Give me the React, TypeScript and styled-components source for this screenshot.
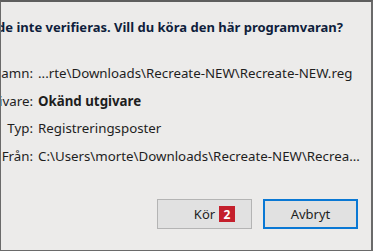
import styled, { createGlobalStyle } from 'styled-components'

const GlobalStyle = createGlobalStyle`
  html, body {
    margin: 0;
    padding: 0;
    background: #ecebea;
  }
  body {
    font-family: 'Noto Sans', 'Open Sans', sans-serif;
  }
`

const rows = [
  { label: 'Namn:', value: '...rte\\Downloads\\Recreate-NEW\\Recreate-NEW.reg' },
  { label: 'Utgivare:', value: 'Okänd utgivare', strong: true },
  { label: 'Typ:', value: 'Registreringsposter' },
  { label: 'Från:', value: 'C:\\Users\\morte\\Downloads\\Recreate-NEW\\Recrea...' }
]

export default function App() {
  return (
    <>
      <GlobalStyle />
      <Frame>
        <Heading>
          <span>Utgivaren kunde inte verifieras. Vill du köra den här programvaran?</span>
        </Heading>
        <Details>
          {rows.map((r) => (
            <Row key={r.label}>
              <Label>
                <span>{r.label}</span>
              </Label>
              <Value $strong={r.strong}>{r.value}</Value>
            </Row>
          ))}
        </Details>
        <Buttons>
          <Button>
            Kör
            <Badge>2</Badge>
          </Button>
          <Button $primary>Avbryt</Button>
        </Buttons>
      </Frame>
    </>
  )
}

const Frame = styled.div`
  box-sizing: border-box;
  width: 373px;
  height: 251px;
  background: #ecebea;
  border-top: 2px solid #5e5e5e;
  border-left: 1px solid #6a6a6a;
  border-right: 2px solid #6a6a6a;
  border-bottom: 1px solid #6a6a6a;
  overflow: hidden;
  display: flex;
  flex-direction: column;
`

const Heading = styled.div`
  display: flex;
  justify-content: flex-end;
  white-space: nowrap;
  padding: 16px 28px 0 0;
  height: 22px;
  font-size: 13px;
  font-weight: 700;
  color: #0f1e3c;
`

const Details = styled.div`
  display: flex;
  flex-direction: column;
  gap: 9.6px;
  margin-top: 24px;
`

const Row = styled.div`
  display: flex;
  align-items: center;
  height: 18px;
  font-size: 13.3px;
  color: #1e1e1e;
  white-space: nowrap;
`

const Label = styled.div`
  width: 32px;
  flex: none;
  display: flex;
  justify-content: flex-end;
`

const Value = styled.div<{ $strong?: boolean }>`
  margin-left: 5px;
  font-weight: ${(p) => (p.$strong ? 700 : 400)};
`

const Buttons = styled.div`
  display: flex;
  justify-content: flex-end;
  gap: 11px;
  margin-top: auto;
  padding: 0 13px 21px 0;
`

const Button = styled.div<{ $primary?: boolean }>`
  position: relative;
  box-sizing: border-box;
  width: 95px;
  height: 30px;
  display: flex;
  align-items: center;
  justify-content: center;
  background: #e1e1e1;
  border: ${(p) => (p.$primary ? '2px solid #0a78d4' : '1px solid #b4b4b4')};
  font-size: 13px;
  color: #1e1e1e;
`

const Badge = styled.span`
  position: absolute;
  left: 61px;
  top: 6px;
  width: 16px;
  height: 16px;
  background: #c4202c;
  color: #fff;
  font-size: 12px;
  font-weight: 700;
  display: flex;
  align-items: center;
  justify-content: center;
`
